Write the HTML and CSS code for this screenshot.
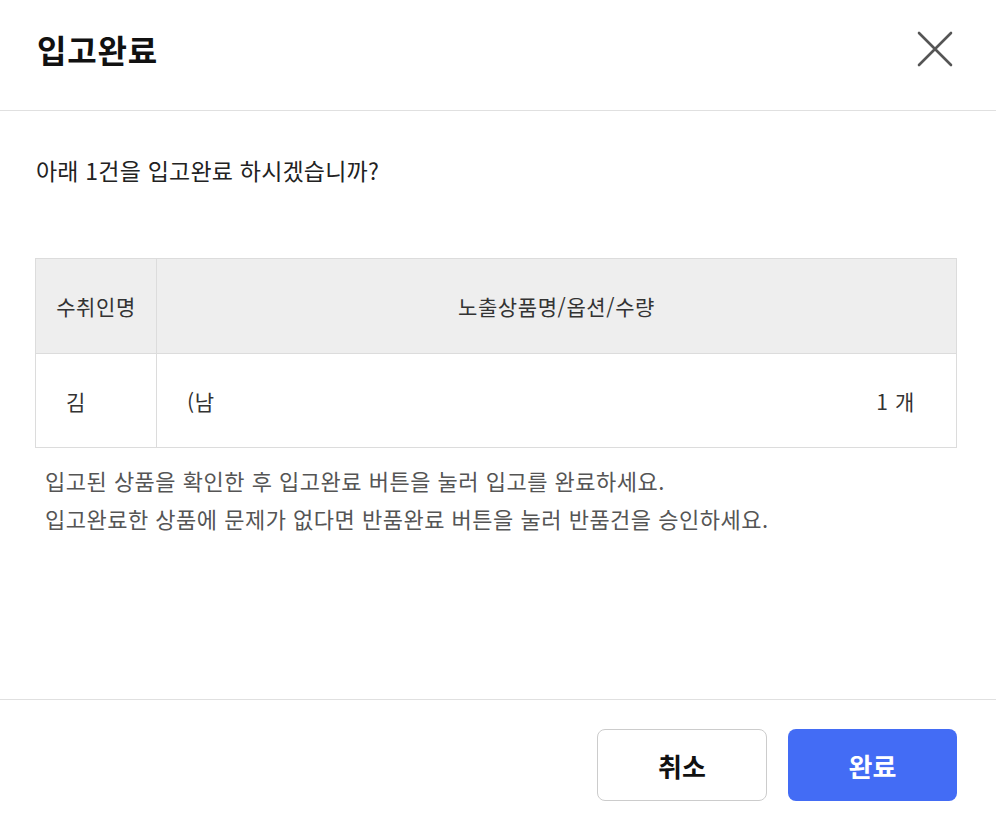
FILE: index.html
```html
<!DOCTYPE html>
<html lang="ko">
<head>
	<meta charset="UTF-8">
	<title>입고완료</title>
	<link rel="stylesheet" href="styles.css">
</head>
<body>
	<div class="modal">
		<div class="modal-head">
			<h1 class="modal-title">입고완료</h1>
			<button class="close-btn" aria-label="닫기">
				<svg width="36" height="36" viewBox="0 0 36 36">
					<path d="M2 2 L34 34 M34 2 L2 34" stroke="#555" stroke-width="2.6" stroke-linecap="round" fill="none"/>
				</svg>
			</button>
		</div>
		<div class="modal-body">
			<p class="question">아래 1건을 입고완료 하시겠습니까?</p>
			<table class="item-table">
				<thead>
					<tr>
						<th class="col-name">수취인명</th>
						<th>노출상품명/옵션/수량</th>
					</tr>
				</thead>
				<tbody>
					<tr>
						<td class="col-name">김</td>
						<td>
							<div class="product">
								<span>(남</span>
								<span>1 개</span>
							</div>
						</td>
					</tr>
				</tbody>
			</table>
			<p class="notice">입고된 상품을 확인한 후 입고완료 버튼을 눌러 입고를 완료하세요.<br>
			입고완료한 상품에 문제가 없다면 반품완료 버튼을 눌러 반품건을 승인하세요.</p>
		</div>
		<div class="modal-foot">
			<button class="btn btn-cancel">취소</button>
			<button class="btn btn-ok">완료</button>
		</div>
	</div>
</body>
</html>
```

FILE: styles.css
```css
*{
	box-sizing:border-box;
}
body{
	margin:0;
	background:#fff;
	font-family:"Noto Sans CJK KR","Noto Sans",sans-serif;
	color:#222;
}
.modal{
	width:996px;
	height:826px;
	display:flex;
	flex-direction:column;
}
.modal-head{
	height:111px;
	border-bottom:1px solid #e0e0e0;
	display:flex;
	align-items:center;
	justify-content:space-between;
	padding:0 43px 12px 37px;
}
.modal-title{
	margin:0;
	font-size:32px;
	font-weight:700;
	color:#111;
	letter-spacing:0.8px;
}
.close-btn{
	border:0;
	background:none;
	padding:0;
	width:36px;
	height:36px;
	cursor:pointer;
}
.modal-body{
	flex:1;
	padding:0 39px 0 35px;
}
.question{
	margin:44px 0 0 1px;
	font-size:23px;
	line-height:30px;
	color:#222;
	letter-spacing:0.2px;
}
.item-table{
	width:100%;
	margin-top:73px;
	border-collapse:collapse;
	font-size:21px;
	color:#333;
	letter-spacing:0.6px;
}
.item-table th,
.item-table td{
	border:1px solid #dcdcdc;
	height:95px;
	font-weight:400;
}
.item-table th{
	background:#eeeeee;
	text-align:center;
}
.item-table td{
	height:94px;
	padding:0 41px 0 30px;
	text-align:left;
}
.item-table .col-name{
	width:121px;
}
.item-table td.col-name{
	padding-left:30px;
}
.product{
	display:flex;
	justify-content:space-between;
}
.notice{
	margin:13px 0 0 10px;
	font-size:22px;
	line-height:38px;
	color:#555;
	letter-spacing:0.5px;
}
.modal-foot{
	height:127px;
	border-top:1px solid #e0e0e0;
	display:flex;
	justify-content:flex-end;
	align-items:flex-start;
	gap:21px;
	padding:29px 39px 0 0;
}
.btn{
	width:170px;
	height:72px;
	border-radius:8px;
	font-family:inherit;
	font-size:26px;
	font-weight:700;
	cursor:pointer;
}
.btn-cancel{
	background:#fff;
	border:1px solid #cccccc;
	color:#111;
}
.btn-ok{
	width:169px;
	background:#436cf5;
	border:0;
	color:#fff;
}
```
